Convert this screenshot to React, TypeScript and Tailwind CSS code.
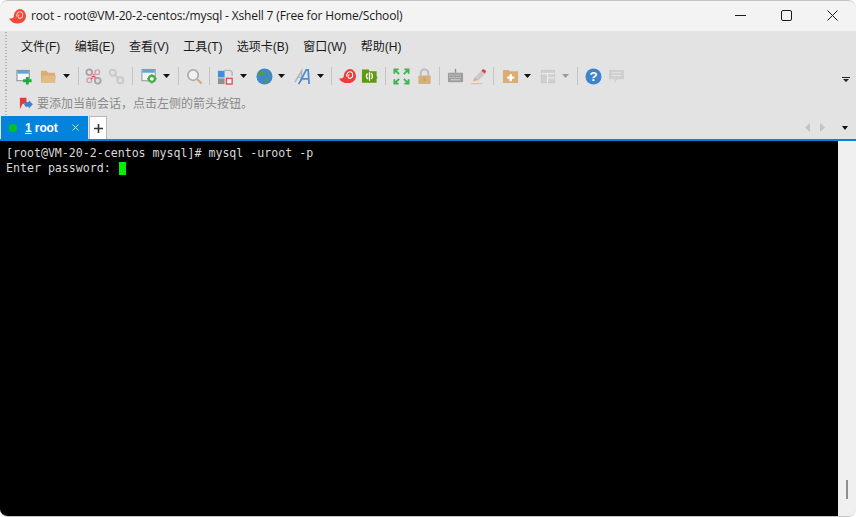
import React from "react";

const Caret = ({ color = "#111", className = "ml-[5px]" }: { color?: string; className?: string }) => (
  <svg width="7" height="4" viewBox="0 0 7 4" className={`${className} shrink-0`}><path d="M0 0h7L3.500 4z" fill={color} /></svg>
);
const Sep = ({ className }: { className: string }) => <div className={`w-px h-[18px] bg-[#c4c4c4] shrink-0 ${className}`} />;
const I = ({ children, className = "" }: { children: React.ReactNode; className?: string }) => (
  <svg width="17" height="17" viewBox="0 0 18 18" className={`shrink-0 ${className}`}>{children}</svg>
);
type P = { className?: string };

const NewIcon = (p: P) => (
  <I {...p}>
    <rect x="1" y="2.500" width="13" height="11" fill="#f4f6f8" stroke="#7d8790" />
    <rect x="1.500" y="3" width="12" height="3" fill="#5ea3dc" />
    <path d="M10.500 9.500h3v2.500h3v3h-3v2.500h-3V15h-3v-3h3z" fill="#22a83a" />
  </I>
);
const FolderIcon = (p: P) => (
  <I {...p}>
    <path d="M1 3h6l1.500 2H16v11H1z" fill="#d9ad73" />
    <path d="M3 8h14l-1.500 8H1z" fill="#e2bb87" />
  </I>
);
const LinkBroken = (p: P) => (
  <I {...p}>
    <circle cx="4.500" cy="4.500" r="3" fill="none" stroke="#a5a5a5" strokeWidth="2" />
    <circle cx="13.500" cy="13.500" r="3" fill="none" stroke="#a5a5a5" strokeWidth="2" />
    <circle cx="13" cy="4.500" r="2.500" fill="none" stroke="#c8a8a8" strokeWidth="1.500" />
    <circle cx="4.500" cy="13" r="2.500" fill="none" stroke="#c8a8a8" strokeWidth="1.500" />
    <path d="M7 9h4M9 6.500l1 1M8 10.500l-1.500 1M11 11l-1-1" stroke="#e8506a" strokeWidth="1.400" />
  </I>
);
const LinkIcon = (p: P) => (
  <I {...p}>
    <circle cx="5" cy="5" r="3.200" fill="none" stroke="#c9c9c9" strokeWidth="2.200" />
    <circle cx="13" cy="13" r="3.200" fill="none" stroke="#c9c9c9" strokeWidth="2.200" />
    <path d="M7.500 7.500l3 3" stroke="#c9c9c9" strokeWidth="2.200" />
  </I>
);
const PropsIcon = (p: P) => (
  <I {...p}>
    <rect x="1" y="1.500" width="14" height="12" fill="#f2f4f6" stroke="#8a929a" />
    <rect x="1.500" y="2" width="13" height="3" fill="#5ea3dc" />
    <circle cx="11.500" cy="11.500" r="3.200" fill="#f2f4f6" stroke="#3fae4a" strokeWidth="2.200" />
    <path d="M11.500 6.500v2M11.500 14.500v2M6.500 11.500h2M14.500 11.500h2" stroke="#3fae4a" strokeWidth="1.600" />
  </I>
);
const SearchIcon = (p: P) => (
  <I {...p}>
    <circle cx="7.500" cy="7.500" r="5.500" fill="#f1f1f1" stroke="#acacac" strokeWidth="1.800" />
    <path d="M11.500 11.500l5 5" stroke="#d2a878" strokeWidth="2.200" />
  </I>
);
const LayoutIcon = (p: P) => (
  <I {...p}>
    <rect x="1" y="3" width="7" height="7" fill="#3d8fdc" />
    <rect x="1" y="11" width="7" height="6" fill="#8f8f8f" />
    <rect x="10" y="11" width="6" height="6" fill="#f6f6f6" stroke="#e0505c" strokeWidth="1.500" />
    <path d="M9 2.500h5l2 2v4" fill="none" stroke="#b5b5b5" strokeWidth="1.500" />
    <path d="M9 1v3.500L7 2.800z" fill="#b5b5b5" />
  </I>
);
const GlobeIcon = (p: P) => (
  <I {...p}>
    <circle cx="9" cy="9" r="8.500" fill="#3f86cf" />
    <path d="M5 2.500c2 .5 4 1 4 3s-2 2.500-3.500 3S2 8 1.500 7C2 5 3.500 3.300 5 2.500zM10 10c2-.5 3.500.5 3.500 2S12 15.500 10.500 16 8.500 11 10 10z" fill="#4f9a58" />
    <path d="M13 3.500l2 2.500-2 1-1.500-2z" fill="#4f9a58" />
  </I>
);
const FontIcon = (p: P) => (
  <I {...p}>
    <path d="M1 15L8 3v11" stroke="#b5b5b5" strokeWidth="1.600" fill="none" />
    <path d="M3 10h6" stroke="#b5b5b5" strokeWidth="1.300" />
    <path d="M5 17L13 2h2l1 15M8.500 11.500h7.500" fill="none" stroke="#4b8fd0" strokeWidth="1.900" />
  </I>
);
const ShellIcon = (p: P) => (
  <I {...p}>
    <path d="M0 11c1.500.5 3.500 0 5-1.500C5 5 8 1 11.500 1S18 4.500 18 8.500c0 5-4 7.500-8.500 7.500C5 16 1.500 14 0 11z" fill="#ef3b3b" />
    <path d="M8 9c0-3 1.500-5 3.500-5s3 1.500 3 3.500-1.500 3.500-3 3.500-2-1-2-2 .8-1.800 1.700-1.800" fill="none" stroke="#fff" strokeWidth="1.100" />
  </I>
);
const GreenFolder = (p: P) => (
  <I {...p}>
    <path d="M1 1.500h7l1 2h7.500v5l1 1.500-1 1.500v4H1z" fill="#5f9a0f" />
    <path d="M7 6c-1.800 1-1.800 4.500.5 5.500M10.500 5.500c2 1 2.200 4.500.3 6M9 4.500v9" fill="none" stroke="#fff" strokeWidth="1.400" />
  </I>
);
const FullIcon = (p: P) => (
  <I {...p}>
    <g fill="none" stroke="#3fb34f" strokeWidth="2">
      <path d="M1.500 6V1.500H6M16.500 6V1.500H12M1.500 12v4.500H6M16.500 12v4.500H12M2 2l4.500 4.500M16 2l-4.500 4.500M2 16l4.500-4.500M16 16l-4.500-4.500" />
    </g>
  </I>
);
const LockIcon = (p: P) => (
  <I {...p}>
    <path d="M5 8V5.500a4 4 0 018 0V8" fill="none" stroke="#b9b9b9" strokeWidth="2" />
    <rect x="2.500" y="8" width="13" height="9" rx="1" fill="#d8ae78" />
    <rect x="8" y="10.500" width="2" height="3.500" fill="#a5a5a5" />
  </I>
);
const KeyboardIcon = (p: P) => (
  <I {...p}>
    <path d="M9 1v4" stroke="#8e8e8e" strokeWidth="1.400" />
    <rect x="1" y="5" width="16" height="10" rx="1" fill="#9d9d9d" />
    <path d="M2.500 7.500h13M2.500 10h13" stroke="#dcdcdc" strokeDasharray="1.200 1" />
    <path d="M4 12.500h10" stroke="#dcdcdc" />
  </I>
);
const PenIcon = (p: P) => (
  <I {...p}>
    <path d="M5 10L12 3l4 3-7 7z" fill="#c9c9c9" />
    <path d="M12 3l2-2 3 2-1 3z" fill="#e33b4a" />
    <path d="M5 10l-2 4 6-1z" fill="#e6a98f" />
    <path d="M1 16.500h12" stroke="#e3c296" strokeWidth="1.200" />
  </I>
);
const NewFolder = (p: P) => (
  <I {...p}>
    <path d="M1 2h6l1 1.500h9V16H1z" fill="#d9ad73" />
    <path d="M8 6.500h2.500v2.500h2.500v2.500h-2.500V14H8v-2.500H5.500V9H8z" fill="#fff" />
  </I>
);
const PanelIcon = (p: P) => (
  <I {...p}>
    <rect x="1.500" y="2.500" width="14" height="13" fill="#d0d0d0" stroke="#c6c6c6" />
    <path d="M1.500 6h14M8 6v9.500M8 10.500h7.500" stroke="#ececec" strokeWidth="1.300" />
  </I>
);
const HelpIcon = (p: P) => (
  <I {...p}>
    <circle cx="9" cy="9" r="8.500" fill="#3f83cc" />
    <text x="9" y="14" textAnchor="middle" fontSize="14" fontWeight="700" fill="#fff" fontFamily="Liberation Sans">?</text>
  </I>
);
const ChatIcon = (p: P) => (
  <I {...p}>
    <path d="M2 2h14a1 1 0 011 1v8a1 1 0 01-1 1h-6l-3 4v-4H2a1 1 0 01-1-1V3a1 1 0 011-1z" fill="#cfcfcf" />
    <path d="M4 5h10M4 8h10" stroke="#e6e6e6" />
  </I>
);

const Grip = () => (
  <div className="w-[2px] h-full shrink-0 bg-[repeating-linear-gradient(to_bottom,#b4b4b4_0,#b4b4b4_1px,transparent_1px,transparent_3px)]" />
);

const menus = ["文件(F)", "编辑(E)", "查看(V)", "工具(T)", "选项卡(B)", "窗口(W)", "帮助(H)"];

export default function App() {
  return (
    <div className="w-[856px] h-[517px] flex flex-col overflow-hidden bg-[#f0f0f0] border-t border-b border-[#c4c4c4] rounded-[8px] font-['Liberation_Sans','Noto_Sans_CJK_SC',sans-serif]">
      <div className="h-[30px] shrink-0 flex items-center bg-[#f3f3f3] pl-[9px]">
        <svg width="17" height="15" viewBox="0 0 18 16" className="shrink-0">
          <path d="M0 10c1.500.5 3.500 0 5-1.500C5 4 8 0 11.500 0S18 3.500 18 7.500c0 5-4 8-8.500 8C5 15.500 1.500 13 0 10z" fill="#ef4a3c" />
          <path d="M8 8c0-3 1.500-5 3.500-5s3 1.500 3 3.500-1.500 3.500-3 3.500-2-1-2-2 .8-1.800 1.700-1.800" fill="none" stroke="#fbd0c0" strokeWidth="1.100" />
        </svg>
        <span className="ml-[5px] text-[12px] text-[#1a1a1a] font-['Open_Sans',sans-serif] tracking-[-0.15px]">root - root@VM-20-2-centos:/mysql - Xshell 7 (Free for Home/School)</span>
        <div className="ml-auto mr-[1px] pb-[2px] flex items-center h-full">
          <div className="w-[45px] flex justify-center">
            <svg width="11" height="11" viewBox="0 0 11 11"><path d="M0 5.500h11" stroke="#1a1a1a" /></svg>
          </div>
          <div className="w-[46px] flex justify-center">
            <svg width="11" height="11" viewBox="0 0 11 11"><rect x=".5" y=".5" width="10" height="10" rx="1.500" fill="none" stroke="#1a1a1a" /></svg>
          </div>
          <div className="w-[46px] flex justify-center">
            <svg width="11" height="11" viewBox="0 0 11 11"><path d="M.5.500l10 10M10.500.500l-10 10" stroke="#1a1a1a" /></svg>
          </div>
        </div>
      </div>

      <div className="flex-1 flex flex-col min-h-0 bg-[#e3e3e3]">
        <div className="h-[31px] shrink-0 flex items-center pl-[5px] pt-[1px]">
          <Grip />
          <div className="ml-[14px] flex items-center gap-[14.3px] text-[12px] text-[#1a1a1a]">
            {menus.map((m) => <span key={m}>{m}</span>)}
          </div>
        </div>

        <div className="h-[28px] shrink-0 flex items-center pl-[5px]">
          <Grip />
          <div className="ml-[9px] flex items-center">
            <NewIcon />
            <FolderIcon className="ml-[7px]" />
            <Caret className="ml-[6px]" />
            <Sep className="ml-[8px]" />
            <LinkBroken className="ml-[6px]" />
            <LinkIcon className="ml-[6px]" />
            <Sep className="ml-[7px]" />
            <PropsIcon className="ml-[8px]" />
            <Caret />
            <Sep className="ml-[8px]" />
            <SearchIcon className="ml-[7px]" />
            <Sep className="ml-[6px]" />
            <LayoutIcon className="ml-[7px]" />
            <Caret className="ml-[6px]" />
            <GlobeIcon className="ml-[9px]" />
            <Caret />
            <FontIcon className="ml-[9px]" />
            <Caret className="ml-[6px]" />
            <Sep className="ml-[7px]" />
            <ShellIcon className="ml-[7px]" />
            <GreenFolder className="ml-[5px]" />
            <Sep className="ml-[7px]" />
            <FullIcon className="ml-[7px]" />
            <LockIcon className="ml-[6px]" />
            <Sep className="ml-[6px]" />
            <KeyboardIcon className="ml-[7px]" />
            <PenIcon className="ml-[6px]" />
            <Sep className="ml-[6px]" />
            <NewFolder className="ml-[8px]" />
            <Caret />
            <PanelIcon className="ml-[9px]" />
            <Caret color="#9a9a9a" />
            <Sep className="ml-[8px]" />
            <HelpIcon className="ml-[7px]" />
            <ChatIcon className="ml-[6px]" />
          </div>
          <svg width="8" height="5" viewBox="0 0 8 5" className="ml-auto mr-[6px] mt-[7px]"><path d="M0 0h8v1H0zM1 2h6L4 5z" fill="#222" /></svg>
        </div>

        <div className="h-[26px] shrink-0 flex items-center pl-[5px]">
          <Grip />
          <svg width="14" height="13" viewBox="0 0 17 16" className="ml-[12px] mt-[1px] shrink-0">
            <path d="M1 1h8v6L4 9 1 15z" fill="#e5383b" />
            <path d="M8 6h4V4l5 5-5 5v-2H8L6 9z" fill="#3f83cc" />
          </svg>
          <span className="ml-[4px] pt-[2px] text-[12px] text-[#8a8a8a]">要添加当前会话，点击左侧的箭头按钮。</span>
        </div>

        <div className="h-[23px] shrink-0 flex items-stretch">
          <div className="w-[87px] ml-[1px] bg-[#0384dc] flex items-center text-white">
            <div className="ml-[8px] w-[8px] h-[8px] rounded-full bg-[#08c21e]" />
            <span className="ml-[8px] pt-[1px] text-[12px] font-bold tracking-[-0.1px]"><span className="underline">1</span> root</span>
            <svg width="7" height="7" viewBox="0 0 7 7" className="ml-auto mr-[9px] mb-[1px]"><path d="M.5.500l6 6M6.500.500l-6 6" stroke="#cfe6f7" /></svg>
          </div>
          <div className="w-[18px] ml-[1px] bg-white border border-[#b8b8b8] border-b-0 flex items-center justify-center">
            <svg width="9" height="9" viewBox="0 0 9 9"><path d="M4.500 0v9M0 4.500h9" stroke="#333" strokeWidth="1.600" /></svg>
          </div>
          <div className="ml-auto flex items-center pr-[8px]">
            <svg width="5" height="9" viewBox="0 0 5 9"><path d="M5 0v9L0 4.500z" fill="#c4c4c4" /></svg>
            <svg width="5" height="9" viewBox="0 0 5 9" className="ml-[10px]"><path d="M0 0v9l5-4.500z" fill="#c4c4c4" /></svg>
            <svg width="6" height="4" viewBox="0 0 6 4" className="ml-[17px]"><path d="M0 0h6L3 4z" fill="#111" /></svg>
          </div>
        </div>

        <div className="h-[2px] shrink-0 bg-[#0384dc]" />

        <div className="flex-1 flex min-h-0">
          <div className="flex-1 bg-black pl-[6px] pt-[5px] font-['DejaVu_Sans_Mono',monospace] text-[11.6px] leading-[15px] text-[#d9d9d9] whitespace-pre">
            <div>[root@VM-20-2-centos mysql]# mysql -uroot -p</div>
            <div className="flex">Enter password: <span className="w-[7px] h-[13px] mt-[1px] bg-[#00f000] ml-[1px]" /></div>
          </div>
          <div className="w-[18px] shrink-0 bg-[#f0f0f0] flex flex-col items-center justify-end pb-[17px]">
            <div className="w-[2px] h-[19px] bg-[#8f8f8f]" />
          </div>
        </div>
      </div>
    </div>
  );
}
